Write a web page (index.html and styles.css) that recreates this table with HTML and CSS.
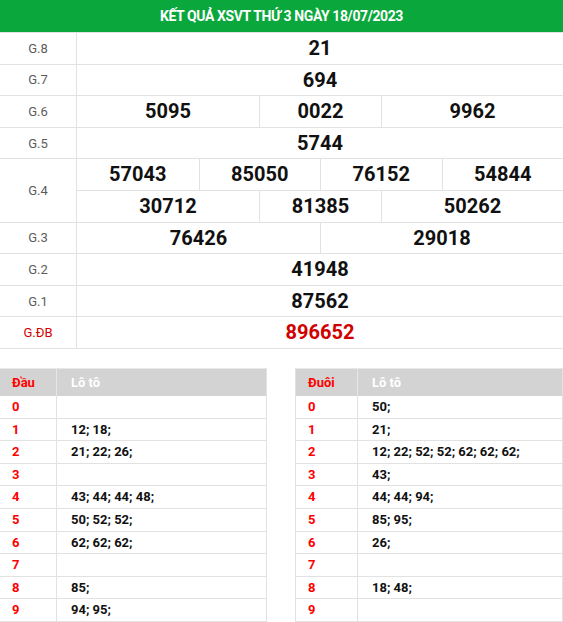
FILE: index.html
```html
<!DOCTYPE html>
<html lang="vi">
<head>
<meta charset="utf-8">
<title>KQ XSVT</title>
<link rel="stylesheet" href="styles.css">
</head>
<body>
<div class="result">
  <div class="title">KẾT QUẢ XSVT THỨ 3 NGÀY 18/07/2023</div>
  <div class="row">
    <div class="label">G.8</div>
    <div class="nums"><div class="sub one"><div class="cell">21</div></div></div>
  </div>
  <div class="row">
    <div class="label">G.7</div>
    <div class="nums"><div class="sub one"><div class="cell">694</div></div></div>
  </div>
  <div class="row">
    <div class="label">G.6</div>
    <div class="nums"><div class="sub three"><div class="cell">5095</div><div class="cell">0022</div><div class="cell">9962</div></div></div>
  </div>
  <div class="row">
    <div class="label">G.5</div>
    <div class="nums"><div class="sub one"><div class="cell">5744</div></div></div>
  </div>
  <div class="row">
    <div class="label">G.4</div>
    <div class="nums">
      <div class="sub four"><div class="cell">57043</div><div class="cell">85050</div><div class="cell">76152</div><div class="cell">54844</div></div>
      <div class="sub three"><div class="cell">30712</div><div class="cell">81385</div><div class="cell">50262</div></div>
    </div>
  </div>
  <div class="row">
    <div class="label">G.3</div>
    <div class="nums"><div class="sub two"><div class="cell">76426</div><div class="cell">29018</div></div></div>
  </div>
  <div class="row">
    <div class="label">G.2</div>
    <div class="nums"><div class="sub one"><div class="cell">41948</div></div></div>
  </div>
  <div class="row">
    <div class="label">G.1</div>
    <div class="nums"><div class="sub one"><div class="cell">87562</div></div></div>
  </div>
  <div class="row">
    <div class="label special">G.ĐB</div>
    <div class="nums"><div class="sub one"><div class="cell special">896652</div></div></div>
  </div>
</div>

<div class="loto">
  <div class="lt lt-left">
    <div class="lr head"><div class="k">Đầu</div><div class="v">Lô tô</div></div>
    <div class="lr"><div class="k">0</div><div class="v"></div></div>
    <div class="lr"><div class="k">1</div><div class="v">12; 18;</div></div>
    <div class="lr"><div class="k">2</div><div class="v">21; 22; 26;</div></div>
    <div class="lr"><div class="k">3</div><div class="v"></div></div>
    <div class="lr"><div class="k">4</div><div class="v">43; 44; 44; 48;</div></div>
    <div class="lr"><div class="k">5</div><div class="v">50; 52; 52;</div></div>
    <div class="lr"><div class="k">6</div><div class="v">62; 62; 62;</div></div>
    <div class="lr"><div class="k">7</div><div class="v"></div></div>
    <div class="lr"><div class="k">8</div><div class="v">85;</div></div>
    <div class="lr"><div class="k">9</div><div class="v">94; 95;</div></div>
  </div>
  <div class="lt lt-right">
    <div class="lr head"><div class="k">Đuôi</div><div class="v">Lô tô</div></div>
    <div class="lr"><div class="k">0</div><div class="v">50;</div></div>
    <div class="lr"><div class="k">1</div><div class="v">21;</div></div>
    <div class="lr"><div class="k">2</div><div class="v">12; 22; 52; 52; 62; 62; 62;</div></div>
    <div class="lr"><div class="k">3</div><div class="v">43;</div></div>
    <div class="lr"><div class="k">4</div><div class="v">44; 44; 94;</div></div>
    <div class="lr"><div class="k">5</div><div class="v">85; 95;</div></div>
    <div class="lr"><div class="k">6</div><div class="v">26;</div></div>
    <div class="lr"><div class="k">7</div><div class="v"></div></div>
    <div class="lr"><div class="k">8</div><div class="v">18; 48;</div></div>
    <div class="lr"><div class="k">9</div><div class="v"></div></div>
  </div>
</div>
</body>
</html>
```

FILE: styles.css
```css
* { box-sizing: border-box; }
body {
  margin: 0;
  font-family: Roboto, "Liberation Sans", Arial, sans-serif;
  background: #fff;
  color: #000;
}
.title {
  height: 33px;
  line-height: 32px;
  background: #0aa83c;
  color: #fff;
  font-weight: 700;
  font-size: 14px;
  letter-spacing: -0.4px;
  text-align: center;
  border-bottom: 1px solid #e2e2e2;
}
.row {
  display: grid;
  grid-template-columns: 77px 1fr;
  border-bottom: 1px solid #e2e2e2;
}
.label {
  display: flex;
  align-items: center;
  justify-content: center;
  font-size: 13px;
  color: #5c5c5c;
  border-right: 1px solid #e2e2e2;
}
.label.special { color: #d10000; }
.sub { display: grid; }
.sub + .sub { border-top: 1px solid #e2e2e2; }
.sub.one { grid-template-columns: 1fr; }
.sub.two { grid-template-columns: 1fr 1fr; }
.sub.three { grid-template-columns: 182px 122px 1fr; }
.sub.four { grid-template-columns: repeat(4, 1fr); }
.cell {
  height: 30.6px;
  line-height: 30.6px;
  text-align: center;
  font-size: 20px;
  font-weight: 700;
  color: #111;
}
.cell + .cell { border-left: 1px solid #e2e2e2; }
.cell.special { color: #d10000; }

.loto {
  display: flex;
  justify-content: space-between;
  padding-top: 19px;
}
.lt {
  border-right: 1px solid #e2e2e2;
  font-size: 13px;
  font-weight: 700;
}
.lt-left { width: 267px; }
.lt-right { width: 268px; border-left: 1px solid #e2e2e2; }
.lt-left .lr { grid-template-columns: 57px 1fr; }
.lt-right .lr { grid-template-columns: 62px 1fr; }
.lr {
  display: grid;
  height: 22.6px;
  border-bottom: 1px solid #e2e2e2;
}
.lr .k {
  color: #ff0000;
  padding-left: 12px;
  line-height: 21.6px;
  border-right: 1px solid #e2e2e2;
}
.lr .v {
  color: #111;
  padding-left: 14px;
  line-height: 21.6px;
}
.lr.head {
  height: 28px;
  background: #d3d3d3;
  border-bottom: none;
  border-top: 1px solid #e8e8e8;
}
.lr.head .k {
  line-height: 27px;
  border-right: 1px solid #e6e6e6;
}
.lr.head .v {
  color: #fff;
  line-height: 27px;
}
```
